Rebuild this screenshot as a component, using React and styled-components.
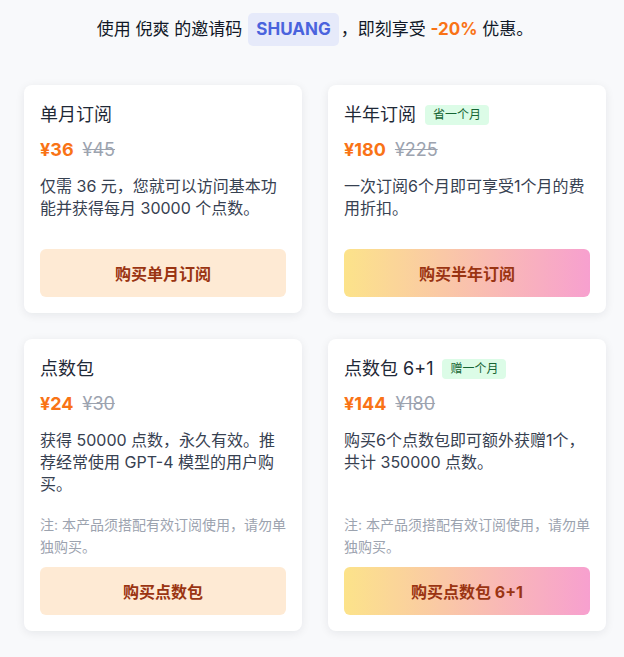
import styled, { createGlobalStyle } from 'styled-components';

const GlobalStyle = createGlobalStyle`
  html, body {
    margin: 0;
    padding: 0;
    background-color: #f8f9fb;
    font-family: "Inter", "Noto Sans CJK SC", sans-serif;
  }
`;

const Page = styled.div`
  min-height: 657px;
  box-sizing: border-box;
  padding: 13px 18px 24px 24px;
`;

const Banner = styled.p`
  margin: 0;
  text-align: center;
  font-size: 17px;
  line-height: 33px;
  color: #111827;
`;

const Code = styled.span`
  display: inline-block;
  margin: 0 2px 0 6px;
  padding: 0 8px;
  border-radius: 5px;
  background-color: #e6eafa;
  color: #4a63dd;
  font-weight: 700;
`;

const Discount = styled.span`
  color: #f97316;
  font-weight: 700;
`;

const Grid = styled.div`
  display: grid;
  grid-template-columns: 278px 278px;
  gap: 26px;
  margin-top: 39px;
`;

const Card = styled.article`
  display: flex;
  flex-direction: column;
  padding: 16px;
  background-color: #fff;
  border-radius: 8px;
  box-shadow: 0 2px 10px rgba(15, 23, 42, 0.08);
`;

const TitleRow = styled.div`
  display: flex;
  align-items: center;
  gap: 9px;
`;

const Title = styled.h3`
  margin: 0;
  font-size: 18px;
  line-height: 28px;
  font-weight: 400;
  color: #1f2937;
`;

const Tag = styled.span`
  padding: 0 8px;
  border-radius: 4px;
  background-color: #dcfce7;
  color: #166534;
  font-size: 12px;
  line-height: 20px;
`;

const PriceRow = styled.div`
  display: flex;
  align-items: baseline;
  gap: 9px;
  margin-top: 7px;
  font-size: 18px;
  line-height: 28px;
`;

const Price = styled.span`
  color: #f97316;
  font-weight: 700;
`;

const OldPrice = styled.s`
  color: #9ca3af;
`;

const Desc = styled.p`
  margin: 11px 0 0;
  font-size: 16px;
  line-height: 22px;
  color: #374151;
`;

const Footer = styled.div`
  margin-top: auto;
  padding-top: ${p => (p.$hasNote ? '19px' : '30px')};
`;

const Note = styled.p`
  margin: 0 0 9px;
  font-size: 14px;
  line-height: 22px;
  color: #9ca3af;
`;

const BuyButton = styled.button`
  display: block;
  width: 100%;
  height: 48px;
  border: none;
  border-radius: 6px;
  font-family: inherit;
  font-size: 16px;
  font-weight: 700;
  color: #9a3412;
  cursor: pointer;
  background: ${p =>
    p.$fancy ? 'linear-gradient(to right, #fce38a, #f7a0cf)' : '#feead4'};
`;

const note = '注: 本产品须搭配有效订阅使用，请勿单独购买。';

const plans = [
  {
    id: 'month',
    title: '单月订阅',
    price: '¥36',
    old: '¥45',
    desc: '仅需 36 元，您就可以访问基本功能并获得每月 30000 个点数。',
    button: '购买单月订阅',
  },
  {
    id: 'half',
    title: '半年订阅',
    tag: '省一个月',
    price: '¥180',
    old: '¥225',
    desc: '一次订阅6个月即可享受1个月的费用折扣。',
    button: '购买半年订阅',
    fancy: true,
  },
  {
    id: 'pack',
    title: '点数包',
    price: '¥24',
    old: '¥30',
    desc: '获得 50000 点数，永久有效。推荐经常使用 GPT-4 模型的用户购买。',
    note,
    button: '购买点数包',
  },
  {
    id: 'pack7',
    title: '点数包 6+1',
    tag: '赠一个月',
    price: '¥144',
    old: '¥180',
    desc: '购买6个点数包即可额外获赠1个，共计 350000 点数。',
    note,
    button: '购买点数包 6+1',
    fancy: true,
  },
];

const App = () => {
  return (
    <Page>
      <GlobalStyle />
      <Banner>
        使用 倪爽 的邀请码<Code>SHUANG</Code>，即刻享受 <Discount>-20%</Discount> 优惠。
      </Banner>
      <Grid>
        {plans.map(plan => (
          <Card key={plan.id}>
            <TitleRow>
              <Title>{plan.title}</Title>
              {plan.tag && <Tag>{plan.tag}</Tag>}
            </TitleRow>
            <PriceRow>
              <Price>{plan.price}</Price>
              <OldPrice>{plan.old}</OldPrice>
            </PriceRow>
            <Desc>{plan.desc}</Desc>
            <Footer $hasNote={!!plan.note}>
              {plan.note && <Note>{plan.note}</Note>}
              <BuyButton $fancy={plan.fancy}>{plan.button}</BuyButton>
            </Footer>
          </Card>
        ))}
      </Grid>
    </Page>
  );
};

export default App;
